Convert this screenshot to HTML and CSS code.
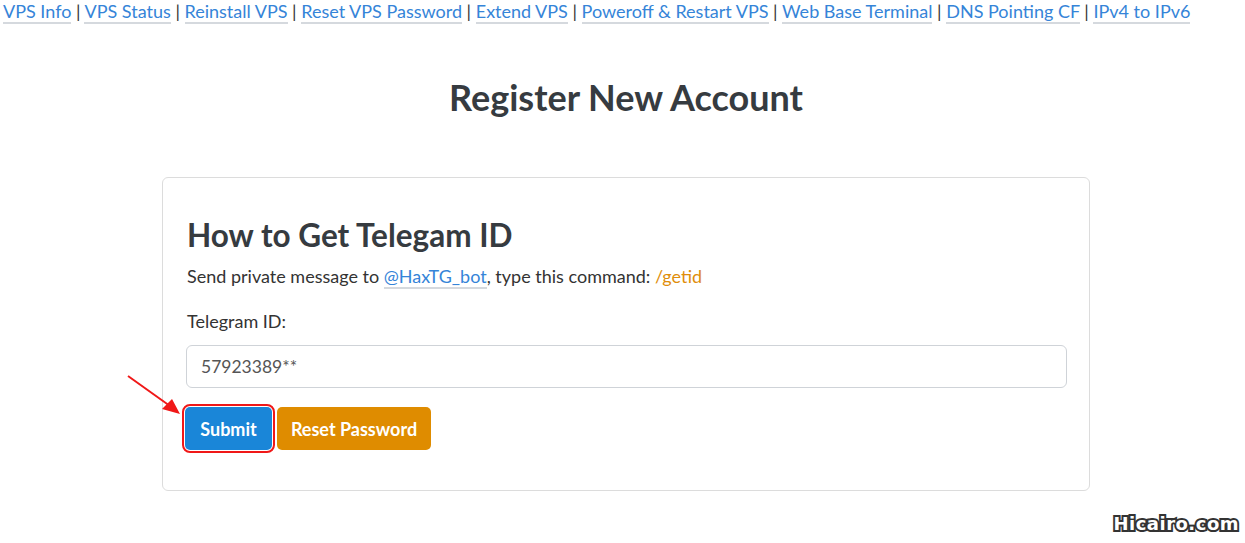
FILE: index.html
```html
<!DOCTYPE html>
<html>
<head>
    <title>Register New Account</title>
    <link rel="stylesheet" href="styles.css">
</head>
<body>
    <div class="nav">
        <a href="#">VPS Info</a> | <a href="#">VPS Status</a> | <a href="#">Reinstall VPS</a> | <a href="#">Reset VPS Password</a> | <a href="#">Extend VPS</a> | <a href="#">Poweroff &amp; Restart VPS</a> | <a href="#">Web Base Terminal</a> | <a href="#">DNS Pointing CF</a> | <a href="#">IPv4 to IPv6</a>
    </div>

    <div class="main">
        <h1 class="title">Register New Account</h1>

        <div class="box">
            <h2>How to Get Telegam ID</h2>
            <p class="tip">Send private message to <a href="#">@HaxTG_bot</a>, type this command: <span class="cmd">/getid</span></p>

            <form id="reg-form">
                <label for="tgid">Telegram ID:</label>
                <input type="text" id="tgid" name="telegram_id" value="57923389**">
                <div class="btns">
                    <span class="mark">
                        <input type="submit" class="btn btn-blue" value="Submit">
                        <svg class="arrow" width="60" height="44" viewBox="0 0 60 44">
                            <line x1="2" y1="2" x2="44" y2="32" stroke="#f01818" stroke-width="2"/>
                            <polygon points="54,40 36,35 46,25" fill="#f01818"/>
                        </svg>
                    </span>
                    <input type="button" class="btn btn-orange" value="Reset Password">
                </div>
            </form>
        </div>
    </div>

    <div class="watermark">Hicairo.com</div>
</body>
</html>
```

FILE: styles.css
```css
body {
    margin: 0;
    font-family: Lato, "Open Sans", sans-serif;
    color: #333;
    background-color: #fff;
    position: relative;
    height: 543px;
    overflow: hidden;
}

a {
    color: #3584d8;
    text-decoration: none;
    border-bottom: 2px solid #d5d9de;
}

.nav {
    padding: 0 0 0 3px;
    font-size: 18px;
    line-height: 22px;
    color: #333;
}

.main {
    padding-left: 7px;
}

.title {
    margin: 54px 0 58px;
    text-align: center;
    font-size: 36px;
    line-height: 43px;
    font-weight: 700;
    color: #363b40;
}

.box {
    width: 878px;
    margin: 0 auto;
    padding: 24px 24px 40px;
    border: 1px solid #dcdcdc;
    border-radius: 6px;
}

.box h2 {
    margin: 14px 0 0;
    font-size: 31.5px;
    line-height: 38px;
    font-weight: 700;
    color: #363b40;
}

.tip {
    margin: 10px 0 21px;
    font-size: 18px;
    line-height: 24px;
}

.cmd {
    color: #e08e0b;
}

label {
    display: block;
    margin-bottom: 12px;
    font-size: 18px;
    line-height: 24px;
}

input[type="text"] {
    box-sizing: border-box;
    width: 881px;
    height: 43px;
    padding: 0 14px;
    margin: 0 0 19px -1px;
    border: 1px solid #cfd3d8;
    border-radius: 6px;
    font-family: Lato, sans-serif;
    font-size: 17.5px;
    color: #555;
}

.btns {
    display: flex;
    gap: 5px;
    margin-left: -2px;
}

.mark {
    position: relative;
    display: flex;
}

.btn {
    height: 43px;
    padding: 0 12px;
    border: none;
    border-radius: 5px;
    color: #fff;
    font-family: Lato, sans-serif;
    font-size: 18px;
    font-weight: 700;
    cursor: pointer;
}

.btn-blue {
    width: 87px;
    background-color: #1a86d8;
    outline: 2px solid #f01818;
    outline-offset: 1px;
}

.btn-orange {
    width: 154px;
    background-color: #df8c00;
}

.arrow {
    position: absolute;
    left: -59px;
    top: -33px;
}

.watermark {
    position: absolute;
    right: 6px;
    bottom: 9px;
    font-family: "DejaVu Sans", sans-serif;
    font-size: 18px;
    font-weight: 700;
    color: #fff;
    -webkit-text-stroke: 4px #333;
    paint-order: stroke fill;
    letter-spacing: 0.5px;
}
```
